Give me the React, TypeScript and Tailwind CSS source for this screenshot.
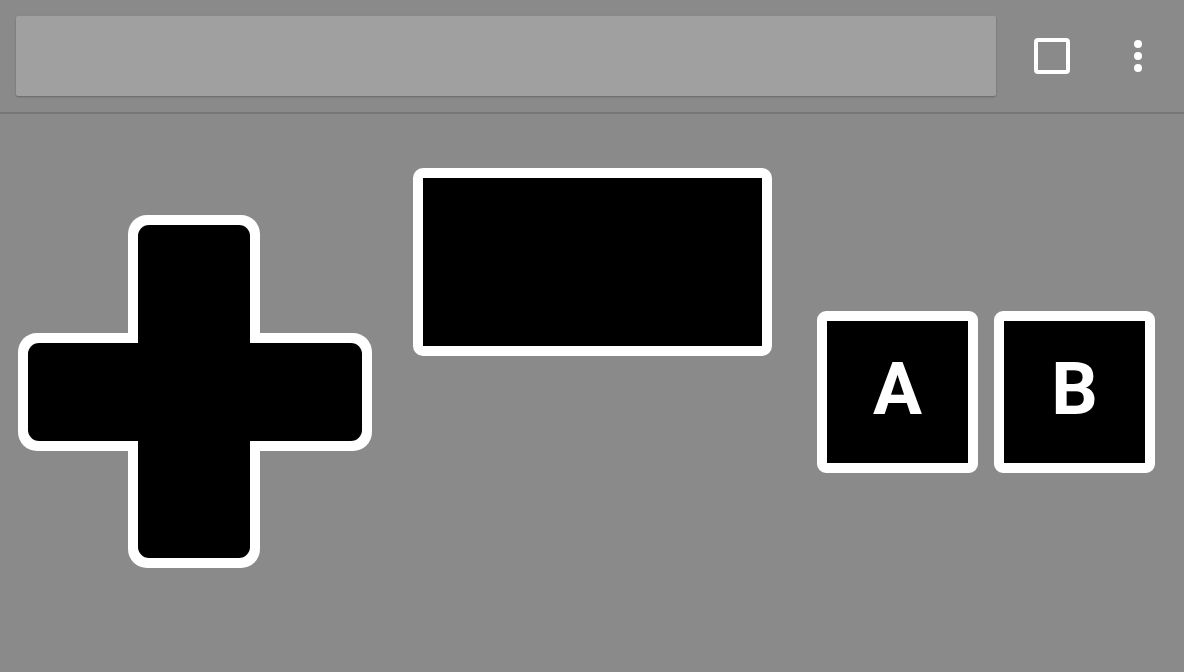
import React from "react";

function DPad() {
  return (
    <svg width="354" height="353" viewBox="0 0 354 353" className="shrink-0 self-start mt-[101px] ml-[18px]">
      <rect x="110" y="0" width="132" height="353" rx="19" fill="#ffffff" />
      <rect x="0" y="118" width="354" height="118" rx="19" fill="#ffffff" />
      <rect x="120" y="10" width="112" height="333" rx="11" fill="#000000" />
      <rect x="10" y="128" width="334" height="98" rx="11" fill="#000000" />
    </svg>
  );
}

function Btn({ label, className }: { label: string; className: string }) {
  return (
    <div
      className={
        "shrink-0 self-start mt-[197px] w-[161px] h-[162px] rounded-[9px] border-[10px] border-white bg-black flex items-center justify-center " +
        className
      }
    >
      <span
        className="text-white font-bold text-[73px] leading-none -mt-[6px]"
        style={{ fontFamily: "Roboto, 'Liberation Sans', sans-serif" }}
      >
        {label}
      </span>
    </div>
  );
}

export default function App() {
  return (
    <div
      className="w-[1184px] h-[672px] bg-[#8a8a8a] flex flex-col overflow-hidden"
      style={{ fontFamily: "Roboto, 'Liberation Sans', sans-serif" }}
    >
      <div className="h-[114px] shrink-0 flex items-center pl-4 border-b-2 border-[#767676]">
        <div className="w-[980px] h-[80px] bg-[#a0a0a0] rounded-[2px] shadow-[0_1px_2px_rgba(0,0,0,0.25)]" />
        <div className="ml-[38px] w-9 h-9 border-4 border-white rounded-[4px]" />
        <div className="ml-[64px] flex flex-col gap-1">
          <div className="w-2 h-2 rounded-full bg-white" />
          <div className="w-2 h-2 rounded-full bg-white" />
          <div className="w-2 h-2 rounded-full bg-white" />
        </div>
      </div>
      <div className="flex-1 flex items-start">
        <DPad />
        <div className="self-start mt-[54px] ml-[41px] w-[359px] h-[188px] rounded-[10px] border-[10px] border-white bg-black shrink-0" />
        <Btn label="A" className="ml-[45px]" />
        <Btn label="B" className="ml-[16px]" />
      </div>
    </div>
  );
}
